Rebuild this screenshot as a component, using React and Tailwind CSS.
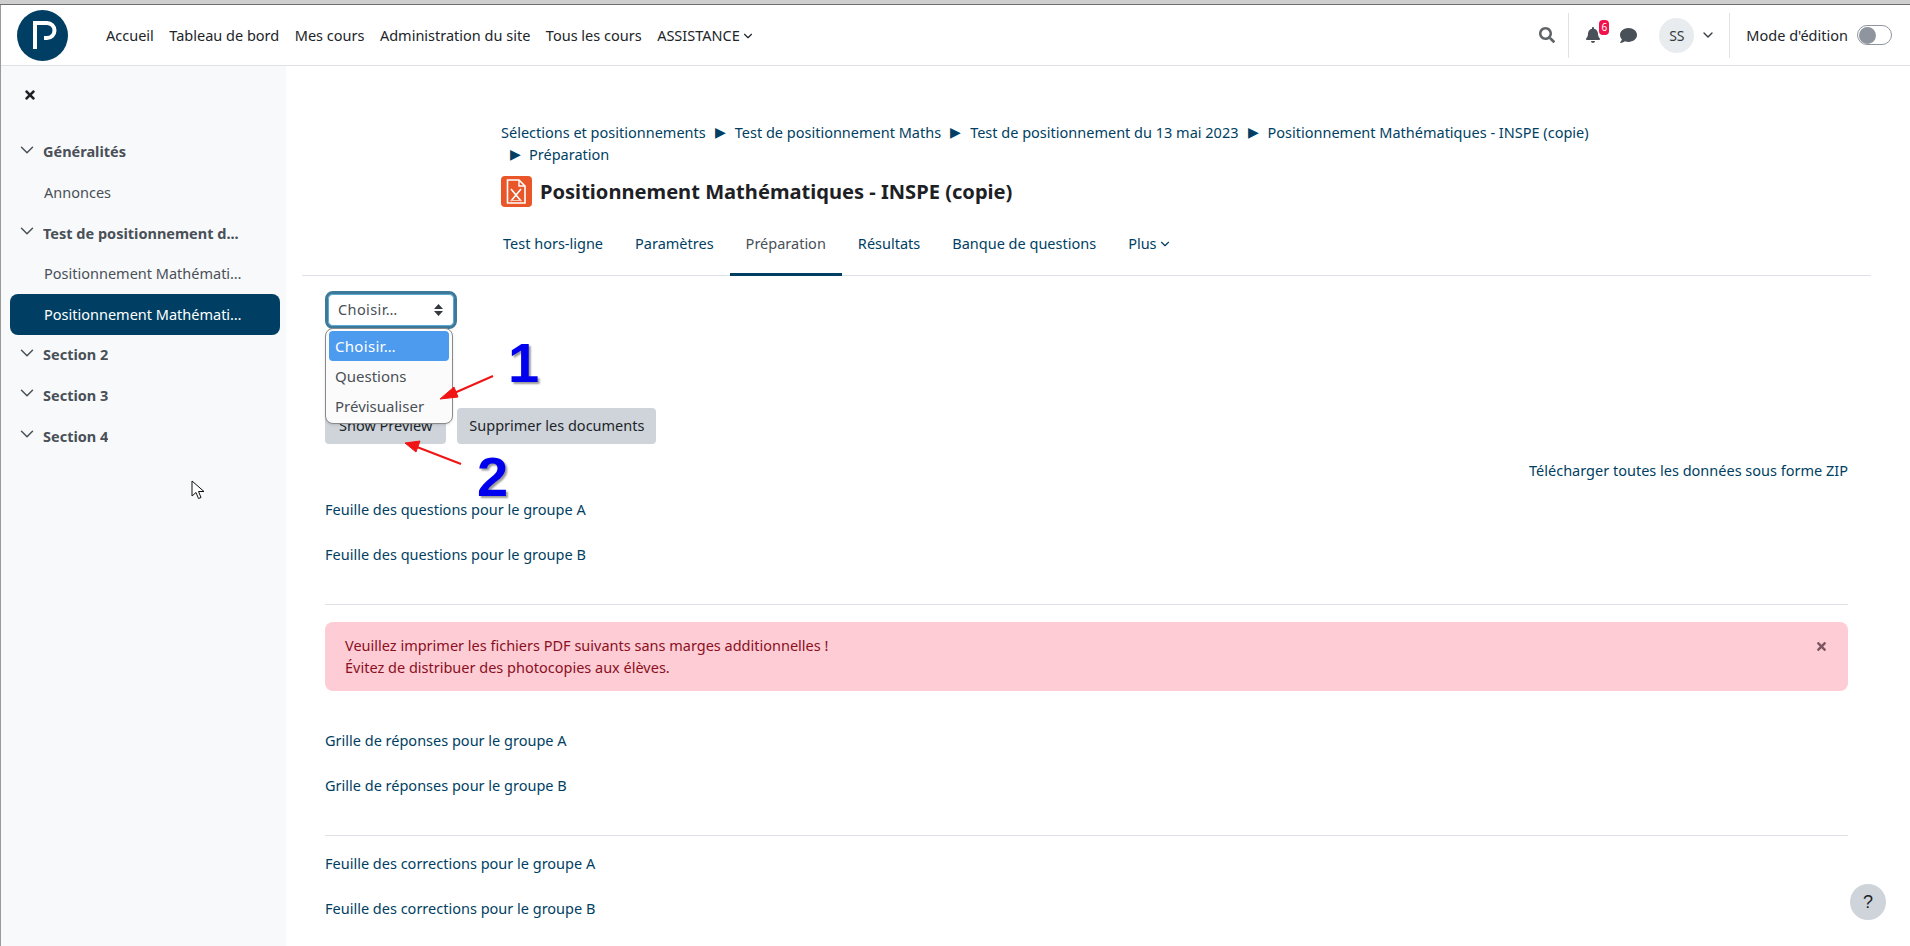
import { ChevronDown } from 'lucide-react';
import { FaBell, FaComment, FaSearch, FaTimes } from 'react-icons/fa';

const navLinks = ['Accueil', 'Tableau de bord', 'Mes cours', 'Administration du site', 'Tous les cours'];
const tabs = ['Test hors-ligne', 'Paramètres', 'Préparation', 'Résultats', 'Banque de questions'];
const crumbs = ['Sélections et positionnements', 'Test de positionnement Maths', 'Test de positionnement du 13 mai 2023', 'Positionnement Mathématiques - INSPE (copie)'];

function Section({ label }) {
  return (
    <div className="flex items-center h-[40.6px] pl-[15px] pr-[38px] font-bold text-[14.5px] text-[#495057]">
      <ChevronDown size={22} strokeWidth={1.6} className="shrink-0 mr-[5px] -mt-[5px]" />
      <span className="truncate">{label}</span>
    </div>
  );
}

function CourseLink({ label, active }) {
  return (
    <div className={`flex items-center h-[40.6px] ml-[9px] mr-[6px] pl-[34px] pr-[34px] rounded-lg text-[14.5px] ${active ? 'bg-[#003f63] text-white' : 'text-[#495057]'}`}>
      <span className="truncate">{label}</span>
    </div>
  );
}

function DocLink({ label, className = '' }) {
  return <a className={`block leading-[22px] text-[#003f63] ${className}`}>{label}</a>;
}

export default function App() {
  return (
    <div className="relative h-[946px] overflow-hidden bg-white font-['Noto_Sans',sans-serif] text-[14.5px] text-[#212529]">
      <div className="h-[5px] bg-[#cfcfcf] border-b border-[#6e6e6e]" />

      <div className="border-l border-[#9a9a9a]">
        {/* Navbar */}
        <header className="flex items-center h-[61px] border-b border-[#dee2e6] pl-[16px] pr-[18px]">
          <svg width="51" height="51" viewBox="0 0 51 51" className="shrink-0">
            <circle cx="25.5" cy="25.5" r="25.5" fill="#003f63" />
            <path d="M18 13v26" stroke="#fff" strokeWidth="4" fill="none" />
            <path d="M16 13H30a7.5 7.5 0 0 1 0 15h-3" stroke="#fff" strokeWidth="4" fill="none" />
          </svg>
          <nav className="flex items-center gap-[15.5px] ml-[38px] pt-[1px]">
            {navLinks.map((link) => (
              <a key={link} className="text-[#212529]">{link}</a>
            ))}
            <a className="flex items-center gap-[1px] text-[#212529]">
              ASSISTANCE <ChevronDown size={14} />
            </a>
          </nav>
          <div className="flex items-center ml-auto h-[45px]">
            <FaSearch size={16} className="text-[#5f6468]" />
            <div className="w-px h-[45px] bg-[#dee2e6] ml-[13px]" />
            <div className="relative ml-[16px]">
              <FaBell size={16} className="text-[#495057]" />
              <span className="absolute -top-[7px] left-[14px] w-[10px] h-[15px] rounded-sm bg-[#f0134d] text-white text-[10px] leading-[15px] text-center">6</span>
            </div>
            <FaComment size={17} className="text-[#495057] ml-[19px]" />
            <div className="flex items-center justify-center w-[35px] h-[35px] rounded-full bg-[#e9ecef] ml-[22px] text-[#343a40] text-[14px]">SS</div>
            <ChevronDown size={16} className="text-[#343a40] ml-[6px]" />
            <div className="w-px h-[45px] bg-[#dee2e6] ml-[13px]" />
            <span className="ml-[16px] pt-[1px] text-[#212529]">Mode d'édition</span>
            <div className="flex items-center w-[35px] h-[20px] ml-[9px] rounded-full border border-[#8f959e] bg-white">
              <div className="w-[17px] h-[17px] ml-px rounded-full bg-[#8f959e]" />
            </div>
          </div>
        </header>

        <div className="flex h-[880px]">
          {/* Sidebar */}
          <aside className="w-[285px] shrink-0 bg-[#f8f9fa]">
            <FaTimes size={14} className="ml-[22px] mt-[22px] text-[#1d2125]" />
            <div className="mt-[30px]">
              <Section label="Généralités" />
              <CourseLink label="Annonces" />
              <Section label="Test de positionnement d..." />
              <CourseLink label="Positionnement Mathématiques - INSPE" />
              <CourseLink label="Positionnement Mathématiques - INSPE (copie)" active />
              <Section label="Section 2" />
              <Section label="Section 3" />
              <Section label="Section 4" />
            </div>
          </aside>

          {/* Main */}
          <main className="flex-1 min-w-0 pl-[16px] pr-[39px] pt-[55px]">
            <div className="pl-[199px] pr-[100px] text-[#003f63] leading-[22px]">
              <div className="flex items-center whitespace-nowrap">
                {crumbs.map((crumb, i) => (
                  <span key={crumb} className="flex items-center">
                    {i > 0 && <span className="text-[14px] mx-[9px]">▶</span>}
                    {crumb}
                  </span>
                ))}
              </div>
              <div className="flex items-center pl-[9px]">
                <span className="text-[14px] mr-[8px]">▶</span>Préparation
              </div>
              <div className="flex items-center mt-[11px]">
                <svg width="31" height="31" viewBox="0 0 31 31" className="shrink-0">
                  <rect width="31" height="31" rx="4" fill="#e8562a" />
                  <path d="M6.5 4H18l6 6v17H6.5z" fill="none" stroke="#fff" strokeWidth="1.6" />
                  <path d="M18 4v6h6" fill="none" stroke="#fff" strokeWidth="1.4" />
                  <path d="M10 13l10 12M20 13L10 25" fill="none" stroke="#fff" strokeWidth="1.6" />
                  <path d="M9.5 24.5h11" stroke="#f6c7b6" strokeWidth="1" />
                </svg>
                <h1 className="ml-[8px] text-[20.1px] font-bold text-[#1d2125] whitespace-nowrap">Positionnement Mathématiques - INSPE (copie)</h1>
              </div>
            </div>

            {/* Tabs */}
            <div className="flex h-[62px] mt-[7px] pl-[185px] border-b border-[#dee2e6] text-[#003f63] whitespace-nowrap">
              {tabs.map((tab) => (
                <a key={tab} className={`flex items-center px-[16px] -mb-px border-b-[3px] ${tab === 'Préparation' ? 'text-[#495057] border-[#003f63]' : 'border-transparent'}`}>{tab}</a>
              ))}
              <a className="flex items-center gap-[1px] px-[16px] -mb-px border-b-[3px] border-transparent">Plus <ChevronDown size={14} /></a>
            </div>

            <div className="px-[23px]">
              <div className="flex items-center justify-between w-[132px] h-[38px] mt-[15px] pl-[10px] pr-[11px] rounded-lg border-[3px] border-[#3d7a99] text-[#495057] bg-white shadow-[inset_0_0_0_1px_#5aa9d6]">
                <span className="tracking-[0.4px]">Choisir…</span>
                <svg width="9" height="12" viewBox="0 0 9 12"><path d="M4.5 0L9 5H0zM4.5 12L0 7h9z" fill="#343a40" /></svg>
              </div>

              <div className="flex gap-[11px] mt-[79px]">
                <button className="h-[36px] px-[14px] rounded bg-[#ced4da] text-[#212529]">Show Preview</button>
                <button className="h-[36px] px-[12px] rounded bg-[#ced4da] text-[#212529]">Supprimer les documents</button>
              </div>

              <DocLink label="Télécharger toutes les données sous forme ZIP" className="text-right mt-[15px]" />
              <DocLink label="Feuille des questions pour le groupe A" className="mt-[17px]" />
              <DocLink label="Feuille des questions pour le groupe B" className="mt-[23px]" />
              <hr className="border-[#dee2e6] mt-[39px]" />

              <div className="relative h-[69px] mt-[17px] px-[20px] py-[12px] rounded-lg bg-[#fdccd4] text-[#8a0f1f] leading-[22px]">
                <p>Veuillez imprimer les fichiers PDF suivants sans marges additionnelles !</p>
                <p>Évitez de distribuer des photocopies aux élèves.</p>
                <FaTimes size={13} className="absolute right-[20px] top-[18px] text-[#7d5560]" />
              </div>

              <DocLink label="Grille de réponses pour le groupe A" className="mt-[38px]" />
              <DocLink label="Grille de réponses pour le groupe B" className="mt-[23px]" />
              <hr className="border-[#dee2e6] mt-[39px]" />
              <DocLink label="Feuille des corrections pour le groupe A" className="mt-[16px]" />
              <DocLink label="Feuille des corrections pour le groupe B" className="mt-[23px]" />
            </div>
          </main>
        </div>
      </div>

      {/* Native select popup */}
      <div className="absolute left-[325px] top-[328px] w-[128px] h-[96px] px-[3px] pt-[2px] rounded-lg border border-[#8a8a8a] bg-[#fbfbfb] text-[15px] text-[#495057] shadow-sm">
        <div className="flex items-center h-[30px] px-[6px] rounded bg-[#4d9bef] text-white tracking-[0.3px]">Choisir…</div>
        <div className="flex items-center h-[30px] px-[6px]">Questions</div>
        <div className="flex items-center h-[30px] px-[6px]">Prévisualiser</div>
      </div>

      {/* Annotations drawn on the screenshot */}
      <svg className="absolute inset-0 pointer-events-none" width="1910" height="946">
        <path d="M493 376L452 394" stroke="#f01414" strokeWidth="2" />
        <path d="M440 399L454 387L458 397Z" fill="#f01414" stroke="#f01414" />
        <path d="M461 464L417 447" stroke="#f01414" strokeWidth="2" />
        <path d="M405 443L420 441L416 452Z" fill="#f01414" stroke="#f01414" />
      </svg>
      <span className="absolute left-[508px] top-[331px] font-['Liberation_Sans',sans-serif] font-bold text-[56px] leading-[64px] text-[#0000ee] [text-shadow:2px_2px_2px_#9a9a9a]">1</span>
      <span className="absolute left-[477px] top-[445px] font-['Liberation_Sans',sans-serif] font-bold text-[56px] leading-[64px] text-[#0000ee] [text-shadow:2px_2px_2px_#9a9a9a]">2</span>

      {/* Mouse cursor */}
      <svg className="absolute left-[191px] top-[480px]" width="14" height="21" viewBox="0 0 14 21">
        <path d="M1 1v15l4-3.5 2.5 6 2.5-1-2.5-6H13z" fill="#fff" stroke="#111" strokeWidth="1" />
      </svg>

      {/* Help button */}
      <div className="absolute left-[1850px] top-[884px] flex items-center justify-center w-[36px] h-[36px] rounded-full bg-[#ced4da] font-['Liberation_Sans',sans-serif] text-[18px] text-[#1d2125]">?</div>
    </div>
  );
}
